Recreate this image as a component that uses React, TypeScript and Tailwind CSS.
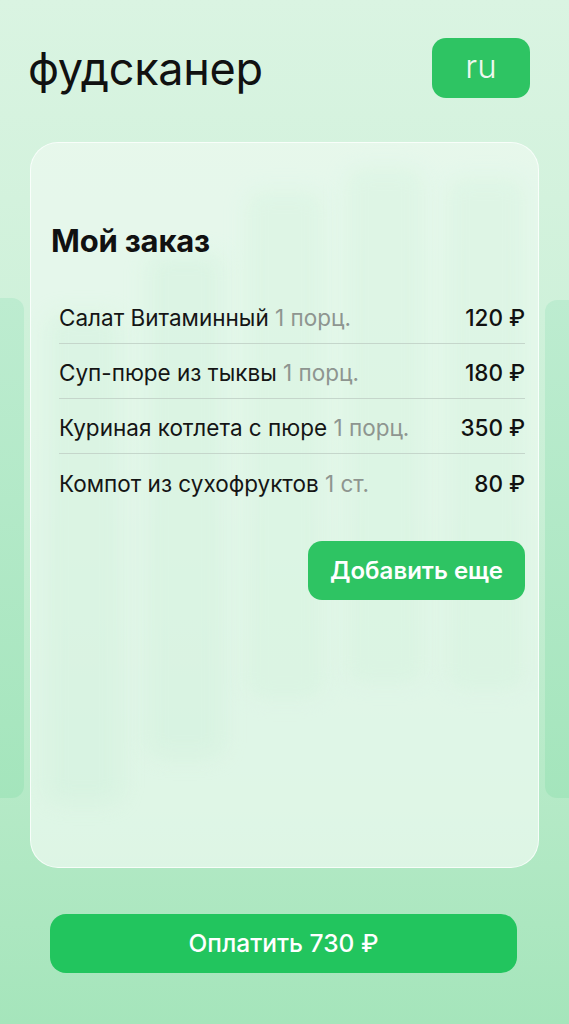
import React from "react";

const items = [
  { name: "Салат Витаминный", qty: "1 порц.", price: "120 ₽" },
  { name: "Суп-пюре из тыквы", qty: "1 порц.", price: "180 ₽" },
  { name: "Куриная котлета с пюре", qty: "1 порц.", price: "350 ₽" },
  { name: "Компот из сухофруктов", qty: "1 ст.", price: "80 ₽" },
];

export default function App() {
  return (
    <div
      className="relative w-[569px] h-[1024px] overflow-hidden bg-gradient-to-b from-[#daf4e2] via-[#c8efd5] to-[#a5e5bb]"
      style={{ fontFamily: "Inter, 'Noto Sans', sans-serif" }}
    >
      {/* side panels peeking */}
      <div className="absolute left-0 top-[298px] w-[24px] h-[500px] rounded-r-[12px] bg-gradient-to-b from-[#bdecd0] to-[#a4e5bc]" />
      <div className="absolute right-0 top-[300px] w-[24px] h-[498px] rounded-l-[12px] bg-gradient-to-b from-[#bdecd0] to-[#a4e5bc]" />

      <div className="relative flex flex-col">
        <header className="flex items-center justify-between pl-[28px] pr-[39px] pt-[38px] h-[98px]">
          <h1 className="text-[45px] leading-none font-normal text-[#111] tracking-[-0.3px]">фудсканер</h1>
          <button className="w-[98px] h-[60px] rounded-[14px] bg-[#2ec463] text-[#eef8f0] text-[33px] leading-none font-light pb-[4px]">
            ru
          </button>
        </header>

        <section className="relative mx-[30px] mt-[44px] h-[726px] rounded-[28px] border border-white/80 bg-[#e6f8eb]/70 overflow-hidden">
          {/* blurred background columns */}
          <div className="absolute inset-0 pointer-events-none">
            <div className="absolute left-[15px] top-[170px] w-[76px] h-[490px] rounded-[16px] bg-[#c4eed2]/40 blur-[10px]" />
            <div className="absolute left-[115px] top-[110px] w-[78px] h-[505px] rounded-[16px] bg-[#c4eed2]/40 blur-[10px]" />
            <div className="absolute left-[215px] top-[48px] w-[78px] h-[508px] rounded-[16px] bg-[#c8efd5]/40 blur-[10px]" />
            <div className="absolute left-[315px] top-[25px] w-[78px] h-[515px] rounded-[16px] bg-[#c8efd5]/40 blur-[10px]" />
            <div className="absolute left-[416px] top-[35px] w-[78px] h-[512px] rounded-[16px] bg-[#c8efd5]/40 blur-[10px]" />
            <div className="absolute inset-0 bg-white/20" />
          </div>

          <div className="relative flex flex-col pt-[78px]">
            <h2 className="pl-[20px] text-[31px] leading-[40px] font-bold text-[#111] tracking-[-0.2px]">Мой заказ</h2>
            <ul className="mt-[28px] ml-[28px] mr-[13px] flex flex-col">
              {items.map((it, i) => (
                <li
                  key={i}
                  className={`flex items-center justify-between h-[55px] pt-[4px] ${i < items.length - 1 ? "border-b border-[#c5d6cb]" : ""}`}
                >
                  <span className="text-[22.5px] text-[#151515]">
                    {it.name} <span className="text-[#8e9590]">{it.qty}</span>
                  </span>
                  <span className="text-[22.5px] font-medium text-[#111]">{it.price}</span>
                </li>
              ))}
            </ul>
            <div className="flex justify-end mr-[13px] mt-[32px]">
              <button className="w-[217px] h-[59px] rounded-[14px] bg-[#2ec463] text-white text-[24px] font-semibold">
                Добавить еще
              </button>
            </div>
          </div>
        </section>

        <div className="pl-[50px] pr-[52px] mt-[46px]">
          <button className="w-full h-[59px] rounded-[16px] bg-[#22c55e] text-white text-[24.5px] font-medium">
            Оплатить 730 ₽
          </button>
        </div>
      </div>
    </div>
  );
}
